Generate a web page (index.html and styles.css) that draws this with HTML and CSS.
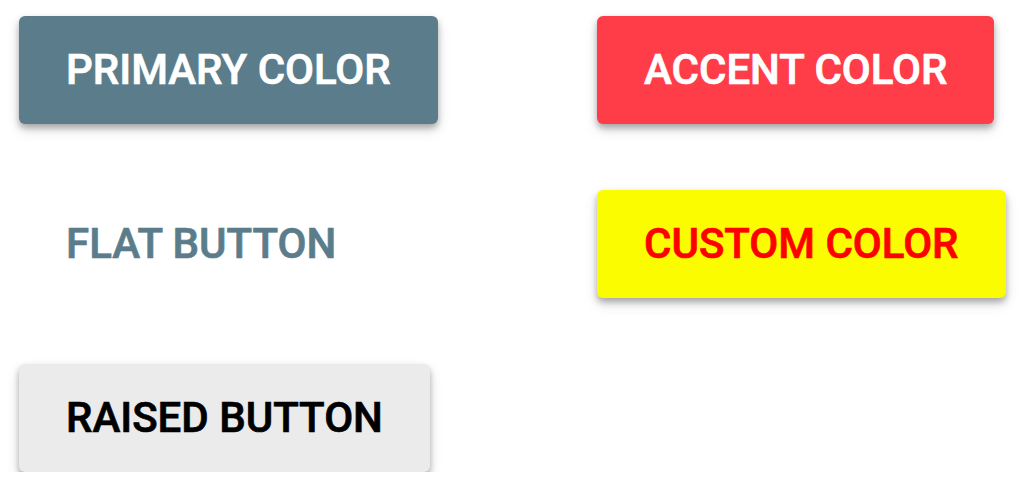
FILE: index.html
```html
<!DOCTYPE html>
<html>
<head>
<meta charset="utf-8">
<link rel="stylesheet" href="styles.css">
</head>
<body>
<div class="grid">
  <div class="cell"><button class="btn raised primary">Primary Color</button></div>
  <div class="cell"><button class="btn raised accent">Accent Color</button></div>
  <div class="cell"><button class="btn flat">Flat Button</button></div>
  <div class="cell"><button class="btn raised custom">Custom Color</button></div>
  <div class="cell"><button class="btn raised plain">Raised Button</button></div>
</div>
</body>
</html>
```
FILE: styles.css
```css
html, body {
  margin: 0;
  padding: 0;
  background: #ffffff;
}
.grid {
  display: grid;
  grid-template-columns: 578px 1fr;
  row-gap: 66px;
  padding: 16px 0 0 19px;
}
.cell {
  display: flex;
  align-items: flex-start;
}
.btn {
  font-family: Roboto, "Liberation Sans", sans-serif;
  font-weight: 500;
  font-size: 42px;
  text-transform: uppercase;
  -webkit-text-stroke: 0.7px currentColor;
  height: 108px;
  padding: 0 47px;
  border: none;
  border-radius: 6px;
  min-width: 264px;
  cursor: pointer;
  display: flex;
  align-items: center;
  justify-content: center;
  line-height: 1;
}
.raised {
  box-shadow: 0 4px 6px rgba(0, 0, 0, 0.28), 0 6px 14px rgba(0, 0, 0, 0.12);
}
.primary {
  background: #5b7d8b;
  color: #ffffff;
}
.accent {
  background: #ff3d48;
  color: #ffffff;
}
.flat {
  background: transparent;
  color: #5b7d8b;
}
.custom {
  background: #fcfc00;
  color: #ff0000;
}
.plain {
  background: #ebebeb;
  color: #000000;
}
```
